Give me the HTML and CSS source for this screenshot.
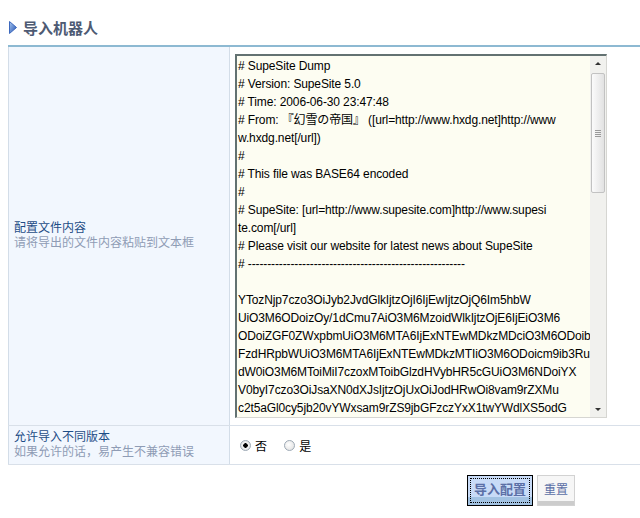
FILE: index.html
```html
<!DOCTYPE html>
<html lang="zh-CN">

<head>
    <meta charset="UTF-8">
    <meta name="viewport" content="width=device-width, initial-scale=1.0">
    <title>导入机器人</title>
    <link rel="stylesheet" href="styles.css">
</head>

<body>
    <div class="main">
        <h2 class="title">
            <svg width="8" height="13" viewBox="0 0 8 13">
                <defs>
                    <linearGradient id="jt" x1="0" y1="0" x2="1" y2="1">
                        <stop offset="0" stop-color="#a9c8f2" />
                        <stop offset="1" stop-color="#1f4fae" />
                    </linearGradient>
                </defs>
                <polygon points="0.5,0.5 7.5,6.5 0.5,12.5" fill="url(#jt)" stroke="#3d68bd" stroke-width="1" />
            </svg>
            导入机器人
        </h2>
        <form>
            <table class="formtable">
                <tr>
                    <th>
                        <strong>配置文件内容</strong>
                        <p>请将导出的文件内容粘贴到文本框</p>
                    </th>
                    <td class="big">
                        <div class="dump">
                            <textarea wrap="off" spellcheck="false"># SupeSite Dump
# Version: SupeSite 5.0
# Time: 2006-06-30 23:47:48
# From: 『幻雪の帝国』 ([url=http://www.hxdg.net]http://www
w.hxdg.net[/url])
#
# This file was BASE64 encoded
#
# SupeSite: [url=http://www.supesite.com]http://www.supesi
te.com[/url]
# Please visit our website for latest news about SupeSite
# --------------------------------------------------------

YTozNjp7czo3OiJyb2JvdGlkIjtzOjI6IjEwIjtzOjQ6Im5hbW
UiO3M6ODoizOy/1dCmu7AiO3M6MzoidWlkIjtzOjE6IjEiO3M6
ODoiZGF0ZWxpbmUiO3M6MTA6IjExNTEwMDkzMDciO3M6ODoibG
FzdHRpbWUiO3M6MTA6IjExNTEwMDkzMTIiO3M6ODoicm9ib3Ru
dW0iO3M6MToiMiI7czoxMToibGlzdHVybHR5cGUiO3M6NDoiYX
V0byI7czo3OiJsaXN0dXJsIjtzOjUxOiJodHRwOi8vam9rZXMu
c2t5aGl0cy5jb20vYWxsam9rZS9jbGFzczYxX1twYWdlXS5odG
1sIjtzOjEwOiJsaXN0cGFnZXMiO3M6MToiMSI7czo5OiJzdWJq</textarea>
                            <div class="scrollbar">
                                <span class="btn up"></span>
                                <span class="thumb"><i></i></span>
                                <span class="btn down"></span>
                            </div>
                        </div>
                    </td>
                </tr>
                <tr>
                    <th>
                        <strong>允许导入不同版本</strong>
                        <p>如果允许的话，易产生不兼容错误</p>
                    </th>
                    <td class="radios">
                        <label><input type="radio" name="ver" checked>否</label>
                        <label><input type="radio" name="ver">是</label>
                    </td>
                </tr>
            </table>
            <div class="btns">
                <button type="submit" class="submit">导入配置</button>
                <button type="reset">重置</button>
            </div>
        </form>
    </div>
</body>

</html>
```

FILE: styles.css
```css
* {
    margin: 0;
    padding: 0;
    box-sizing: border-box;
}

body {
    font: 12px "Liberation Sans", "Noto Sans CJK SC", sans-serif;
    color: #000;
    background: #fff;
}

.main {
    padding-left: 8px;
}

.title {
    display: flex;
    align-items: center;
    height: 45px;
    padding-top: 10px;
    padding-left: 1px;
    font-size: 15px;
    color: #4d5a73;
}

.title svg {
    margin-right: 6px;
}

/* 表单表格 */
.formtable {
    width: 632px;
    border-collapse: collapse;
    border-top: 2px solid #8db9d2;
}

.formtable th {
    width: 221px;
    padding: 4px 5px;
    text-align: left;
    font-weight: normal;
    line-height: 15px;
    vertical-align: middle;
    background: #f2f7fe;
    border-left: 1px solid #d3dde8;
    border-right: 1px solid #d3dde8;
    border-bottom: 1px solid #d9e0e9;
}

.formtable th strong {
    display: block;
    font-weight: normal;
    color: #1e4d86;
}

.formtable th p {
    color: #8f9cb5;
}

.formtable td {
    padding: 4px 5px;
    border-bottom: 1px solid #d9e0e9;
}

.formtable td.big {
    padding: 7px 5px 7px 5px;
}

.dump {
    display: flex;
    width: 372px;
    height: 364px;
    background: #fdfdf2;
    border-top: 2px solid #637272;
    border-left: 2px solid #637272;
    border-right: 1px solid #d6d6d2;
    border-bottom: 1px solid #d6d6d2;
}

.dump textarea {
    flex: 1;
    min-width: 0;
    padding: 1px 0 0 1px;
    border: 0;
    outline: none;
    resize: none;
    overflow: hidden;
    white-space: pre;
    background: transparent;
    font: 12px/18px "Liberation Sans", "Noto Sans CJK JP", sans-serif;
    letter-spacing: -0.12px;
    color: #000;
}

/* 仿滚动条 */
.scrollbar {
    display: flex;
    flex-direction: column;
    width: 16px;
    background: #f1f1ee;
}

.scrollbar .btn {
    position: relative;
    height: 16px;
}

.scrollbar .btn:after {
    content: "";
    position: absolute;
    left: 5px;
    border-left: 3px solid transparent;
    border-right: 3px solid transparent;
}

.scrollbar .up:after {
    top: 6px;
    border-bottom: 3px solid #333;
}

.scrollbar .down:after {
    top: 7px;
    border-top: 3px solid #333;
}

.scrollbar .thumb {
    display: flex;
    align-items: center;
    justify-content: center;
    height: 120px;
    margin: 1px 1px 0 1px;
    border: 1px solid #c2c2c2;
    border-radius: 2px;
    background: linear-gradient(to right, #fbfbfb, #e2e2e2);
}

.scrollbar .thumb i {
    width: 6px;
    height: 7px;
    background: repeating-linear-gradient(#9a9a9a 0 1px, transparent 1px 2px);
}

.scrollbar .down {
    margin-top: auto;
}

.radios label {
    display: inline-flex;
    align-items: center;
    margin-left: 5px;
    margin-right: 9px;
}

.radios input {
    appearance: none;
    width: 11px;
    height: 11px;
    margin-right: 4px;
    border: 1px solid #9eaab6;
    border-radius: 50%;
    background: radial-gradient(circle at 40% 40%, #ffffff, #dcdcdc);
}

.radios input:checked {
    background: radial-gradient(circle, #000 0 2px, #f4f4f4 2.5px, #d8d8d8);
}

/* 按钮 */
.btns {
    display: flex;
    gap: 4px;
    padding: 10px 0 0 459px;
}

.btns button {
    height: 31px;
    padding: 0 6px 5px;
    font: 12px "Liberation Sans", "Noto Sans CJK SC", sans-serif;
    color: #5b6fa6;
    border: 1px solid #d2d2d2;
    background: linear-gradient(#f6f6f6 0 25px, #cccccc 25px);
    cursor: pointer;
}

.btns .submit {
    width: 66px;
    font-size: 13px;
    font-weight: bold;
    border-color: #000;
    background: linear-gradient(#c8dbf7 0 21px, #a2c2e2 21px);
    outline: 1px dotted #000;
    outline-offset: -4px;
}
```
